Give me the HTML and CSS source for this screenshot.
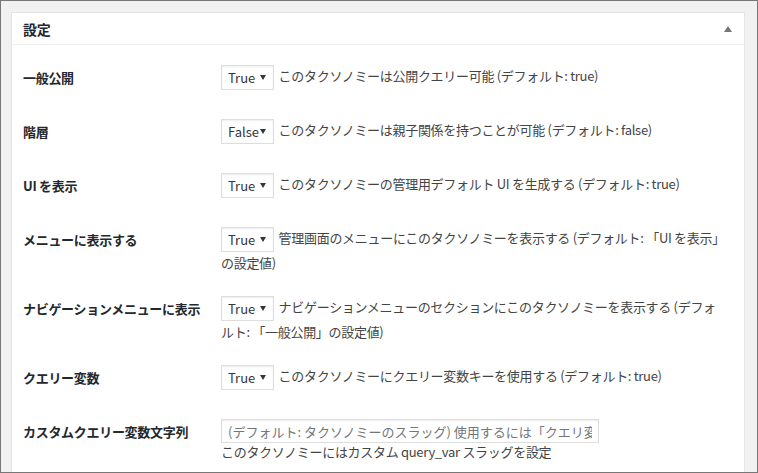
FILE: index.html
```html
<!DOCTYPE html>
<html lang="ja">
<head>
  <meta charset="UTF-8">
  <meta name="viewport" content="width=device-width, initial-scale=1.0">
  <title>設定</title>
  <link rel="stylesheet" href="styles.css">
</head>
<body>
  <div class="frame">
    <div class="postbox">
      <div class="postbox-header">
        <h2>設定</h2>
        <span class="toggle"></span>
      </div>

      <div class="inside">
        <div class="field">
          <label class="field-label">一般公開</label>
          <div class="field-control">
            <span class="select-wrap"><select><option>True</option><option>False</option></select></span>
            このタクソノミーは公開クエリー可能 (デフォルト: true)
          </div>
        </div>

        <div class="field">
          <label class="field-label">階層</label>
          <div class="field-control">
            <span class="select-wrap"><select><option>False</option><option>True</option></select></span>
            このタクソノミーは親子関係を持つことが可能 (デフォルト: false)
          </div>
        </div>

        <div class="field">
          <label class="field-label">UI を表示</label>
          <div class="field-control">
            <span class="select-wrap"><select><option>True</option><option>False</option></select></span>
            このタクソノミーの管理用デフォルト UI を生成する (デフォルト: true)
          </div>
        </div>

        <div class="field">
          <label class="field-label">メニューに表示する</label>
          <div class="field-control">
            <span class="select-wrap"><select><option>True</option><option>False</option></select></span>
            管理画面のメニューにこのタクソノミーを表示する (デフォルト: 「UI を表示」の設定値)
          </div>
        </div>

        <div class="field">
          <label class="field-label">ナビゲーションメニューに表示</label>
          <div class="field-control">
            <span class="select-wrap"><select><option>True</option><option>False</option></select></span>
            ナビゲーションメニューのセクションにこのタクソノミーを表示する (デフォルト: 「一般公開」の設定値)
          </div>
        </div>

        <div class="field">
          <label class="field-label">クエリー変数</label>
          <div class="field-control">
            <span class="select-wrap"><select><option>True</option><option>False</option></select></span>
            このタクソノミーにクエリー変数キーを使用する (デフォルト: true)
          </div>
        </div>

        <div class="field">
          <label class="field-label">カスタムクエリー変数文字列</label>
          <div class="field-control">
            <input type="text" class="regular-text" placeholder="(デフォルト: タクソノミーのスラッグ) 使用するには「クエリ変数」を True に設定">
            <p class="description">このタクソノミーにはカスタム query_var スラッグを設定</p>
          </div>
        </div>
      </div>
    </div>
  </div>
</body>
</html>
```

FILE: styles.css
```css
html, body {
  margin: 0;
  padding: 0;
}
body {
  font-family: "Noto Sans CJK JP", "Noto Sans", sans-serif;
  font-size: 13px;
  letter-spacing: -0.3px;
  color: #444;
  background: #f1f1f1;
}
.frame {
  box-sizing: border-box;
  width: 758px;
  height: 473px;
  border: 1px solid #777;
  background: #f1f1f1;
  padding: 11px 12px 0 10px;
  overflow: hidden;
}
.postbox {
  background: #fff;
  border: 1px solid #e5e5e5;
  box-shadow: 0 1px 1px rgba(0,0,0,0.04);
}
.postbox-header {
  display: flex;
  align-items: center;
  justify-content: space-between;
  border-bottom: 1px solid #eee;
  padding: 0 11px;
  height: 31px;
}
.postbox-header h2 {
  margin: 0;
  font-size: 14px;
  font-weight: 600;
  color: #23282d;
  padding-top: 1px;
}
.toggle {
  width: 0;
  height: 0;
  border-left: 4px solid transparent;
  border-right: 4px solid transparent;
  border-bottom: 6px solid #72777c;
  margin-right: 1px;
}
.inside {
  padding: 6px 12px 12px 11px;
}
.field {
  display: grid;
  grid-template-columns: 198px 1fr;
}
.field-label {
  padding: 18px 0;
  line-height: 18px;
  font-weight: bold;
  color: #23282d;
}
.field-control {
  padding: 14px 10px 8px 0;
  line-height: 22px;
}
.select-wrap {
  position: relative;
  display: inline-block;
  vertical-align: middle;
  margin-right: 2px;
}
.select-wrap::after {
  content: "";
  position: absolute;
  right: 8px;
  top: 10px;
  border-left: 3px solid transparent;
  border-right: 3px solid transparent;
  border-top: 5px solid #32373c;
  pointer-events: none;
}
select {
  -webkit-appearance: none;
  appearance: none;
  box-sizing: border-box;
  width: 53px;
  height: 25px;
  margin: 0;
  padding: 0 12px 0 6px;
  font: inherit;
  font-size: 13px;
  color: #32373c;
  background: #fff;
  border: 1px solid #ddd;
  border-radius: 0;
  box-shadow: inset 0 1px 2px rgba(0,0,0,0.07);
  display: block;
}
.regular-text {
  box-sizing: border-box;
  width: 378px;
  height: 24px;
  margin: 0;
  padding: 0 6px;
  font: inherit;
  font-size: 13px;
  color: #32373c;
  border: 1px solid #ddd;
  box-shadow: inset 0 1px 2px rgba(0,0,0,0.07);
  display: block;
}
.regular-text::placeholder {
  color: #72777c;
}
.description {
  margin: 0;
  line-height: 18px;
}
```
